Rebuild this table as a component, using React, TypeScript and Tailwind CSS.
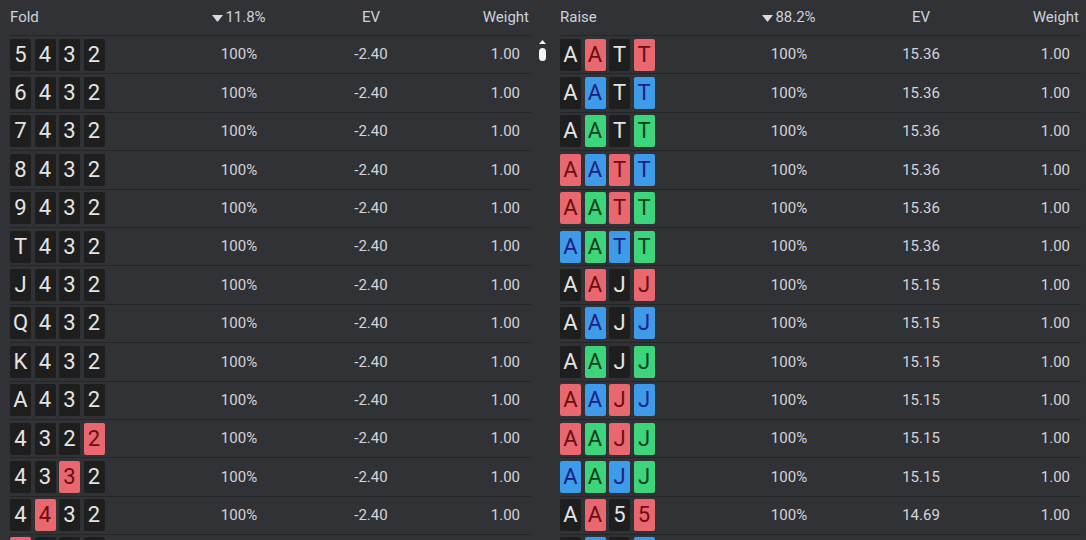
import React from "react";

type Suit = "d" | "r" | "b" | "g";
type Card = [string, Suit];

const cardCls: Record<Suit, string> = {
  d: "bg-[#1e1e1e] text-[#e4e4e4]",
  r: "bg-[#e9676e] text-[#6a0e14]",
  b: "bg-[#3d9be9] text-[#1c2180]",
  g: "bg-[#3dd57b] text-[#0c3f1e]",
};

function parse(s: string): Card[] {
  return s.split(" ").map((t) => [t[0], t[1] as Suit]);
}

const leftRows: string[] = [
  "5d 4d 3d 2d",
  "6d 4d 3d 2d",
  "7d 4d 3d 2d",
  "8d 4d 3d 2d",
  "9d 4d 3d 2d",
  "Td 4d 3d 2d",
  "Jd 4d 3d 2d",
  "Qd 4d 3d 2d",
  "Kd 4d 3d 2d",
  "Ad 4d 3d 2d",
  "4d 3d 2d 2r",
  "4d 3d 3r 2d",
  "4d 4r 3d 2d",
];

const rightRows: [string, string][] = [
  ["Ad Ar Td Tr", "15.36"],
  ["Ad Ab Td Tb", "15.36"],
  ["Ad Ag Td Tg", "15.36"],
  ["Ar Ab Tr Tb", "15.36"],
  ["Ar Ag Tr Tg", "15.36"],
  ["Ab Ag Tb Tg", "15.36"],
  ["Ad Ar Jd Jr", "15.15"],
  ["Ad Ab Jd Jb", "15.15"],
  ["Ad Ag Jd Jg", "15.15"],
  ["Ar Ab Jr Jb", "15.15"],
  ["Ar Ag Jr Jg", "15.15"],
  ["Ab Ag Jb Jg", "15.15"],
  ["Ad Ar 5d 5r", "14.69"],
];

function Cards({ cards, blank }: { cards: Card[]; blank?: boolean }) {
  return (
    <div className="flex gap-[3.5px]">
      {cards.map(([r, s], i) => (
        <div
          key={i}
          className={`w-[21px] h-[32px] rounded-[2px] flex items-center justify-center text-[22px] leading-none ${cardCls[s]}`}
        >
          {blank ? null : r}
        </div>
      ))}
    </div>
  );
}

function Caret() {
  return (
    <svg width="11" height="7" viewBox="0 0 11 7" className="mr-[2px] mt-[1px]">
      <path d="M0 0 H11 L5.5 7 Z" fill="#d6dae2" />
    </svg>
  );
}

function Table({
  title,
  pct,
  rows,
  peek,
}: {
  title: string;
  pct: string;
  rows: { cards: Card[]; ev: string }[];
  peek: Card[];
}) {
  return (
    <div className="w-[521px]">
      <div className="grid grid-cols-[179px_100px_164px_1fr] h-[36px] items-center border-b border-[#25262a] text-[15px] text-[#ccd2dc]">
        <div>{title}</div>
        <div className="flex items-center justify-center">
          <Caret />
          {pct}
        </div>
        <div className="text-center">EV</div>
        <div className="text-right pr-[2px]">Weight</div>
      </div>
      {rows.map((r, i) => (
        <div
          key={i}
          className="grid grid-cols-[179px_100px_164px_1fr] h-[38.4px] items-center border-b border-[#25262a] text-[15px] text-[#d3d5da]"
        >
          <Cards cards={r.cards} />
          <div className="text-center">100%</div>
          <div className="text-center">{r.ev}</div>
          <div className="text-right pr-[11px]">1.00</div>
        </div>
      ))}
      <div className="h-[38.4px] pt-[2px]">
        <Cards cards={peek} blank />
      </div>
    </div>
  );
}

export default function App() {
  const left = leftRows.map((s) => ({ cards: parse(s), ev: "-2.40" }));
  const right = rightRows.map(([s, ev]) => ({ cards: parse(s), ev }));
  return (
    <div
      className="w-[1086px] h-[540px] overflow-hidden bg-[#313236] flex"
      style={{ fontFamily: "Roboto, 'Noto Sans', sans-serif" }}
    >
      <div className="relative w-[550px] pl-[10px] shrink-0">
        <Table title="Fold" pct="11.8%" rows={left} peek={parse("4r 4d 3d 2d")} />
        <div className="absolute left-[539px] top-[40px] flex flex-col items-center">
          <svg width="7" height="4" viewBox="0 0 7 4">
            <path d="M0 4 L3.5 0 L7 4 Z" fill="#f2f2f2" />
          </svg>
          <div className="mt-[4px] w-[7px] h-[13px] rounded-full bg-[#f4f4f4]" />
        </div>
      </div>
      <div className="pl-[10px]">
        <Table title="Raise" pct="88.2%" rows={right} peek={parse("Ad Ab 5d 5b")} />
      </div>
    </div>
  );
}
